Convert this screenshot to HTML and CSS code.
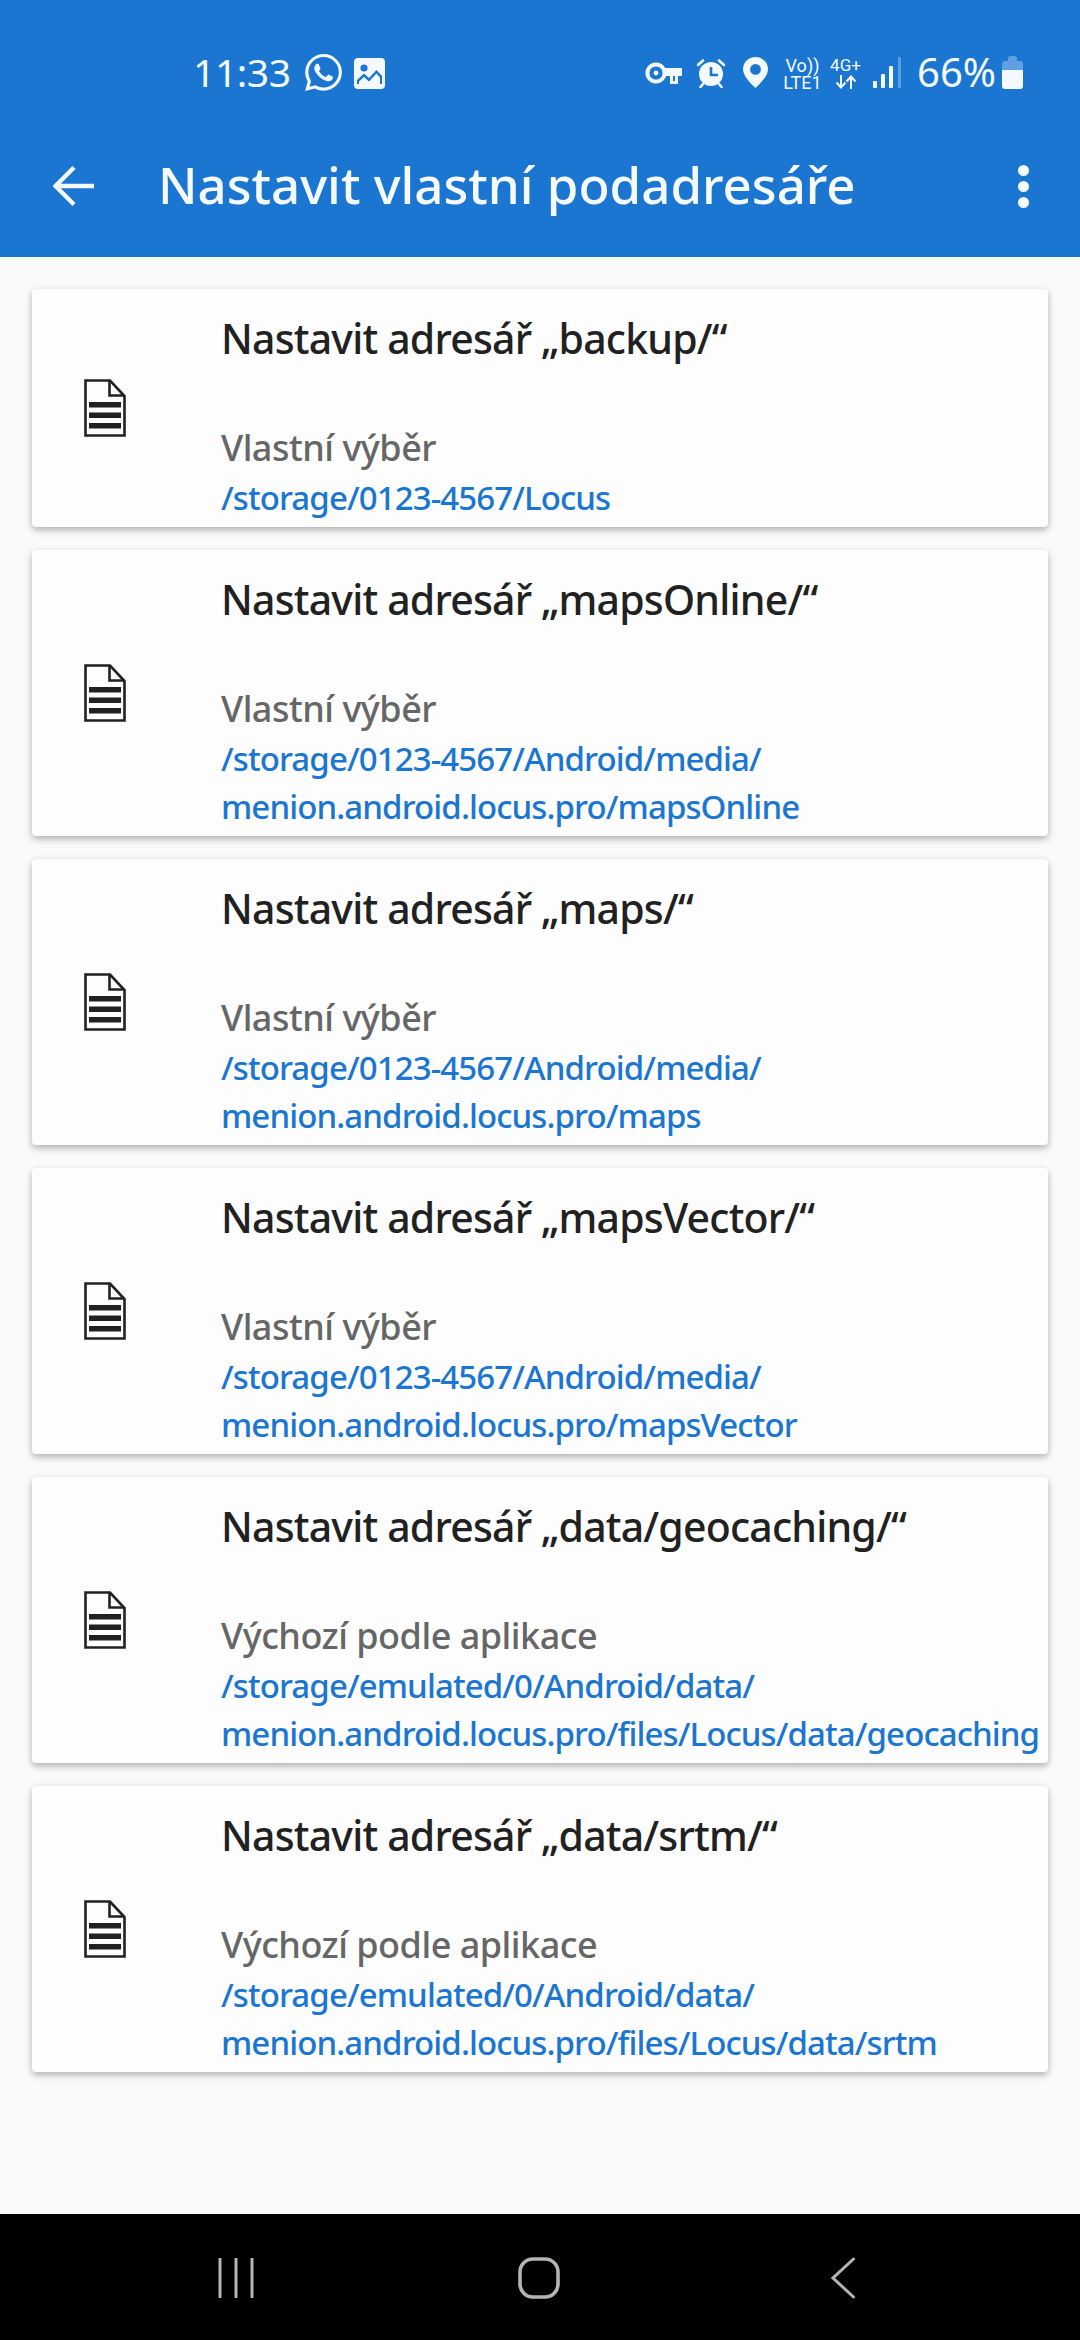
FILE: index.html
```html
<!DOCTYPE html>
<html lang="cs">
<head>
    <meta charset="UTF-8">
    <meta name="viewport" content="width=device-width, initial-scale=1.0">
    <title>Nastavit vlastní podadresáře</title>
    <link rel="stylesheet" href="styles.css">
</head>
<body>
    <svg class="defs" width="0" height="0">
        <symbol id="doc" viewBox="0 0 42 58">
            <path d="M1.5 1.5H26L40.5 17V56.5H1.5Z" fill="none" stroke="#212121" stroke-width="2.6"/>
            <path d="M25.500 2V16.500H40" fill="none" stroke="#212121" stroke-width="2.6"/>
            <rect x="5" y="23" width="32" height="5.500" fill="#212121"/>
            <rect x="5" y="33.500" width="32" height="5.500" fill="#212121"/>
            <rect x="5" y="44" width="32" height="5.500" fill="#212121"/>
        </symbol>
    </svg>

    <header class="top">
        <div class="status">
            <div class="status-left">
                <span class="clock">11:33</span>
                <svg class="ic-wa" viewBox="0 0 24 24"><path fill="#f3f9ff" d="M17.472 14.382c-.297-.149-1.758-.867-2.03-.967-.273-.099-.471-.148-.67.15-.197.297-.767.966-.94 1.164-.173.199-.347.223-.644.075-.297-.15-1.255-.463-2.39-1.475-.883-.788-1.48-1.761-1.653-2.059-.173-.297-.018-.458.13-.606.134-.133.298-.347.446-.52.149-.174.198-.298.298-.497.099-.198.05-.371-.025-.52-.075-.149-.669-1.612-.916-2.207-.242-.579-.487-.5-.669-.51-.173-.008-.371-.01-.57-.01-.198 0-.52.074-.792.372-.272.297-1.04 1.016-1.04 2.479 0 1.462 1.065 2.875 1.213 3.074.149.198 2.096 3.2 5.077 4.487.709.306 1.262.489 1.694.625.712.227 1.36.195 1.871.118.571-.085 1.758-.719 2.006-1.413.248-.694.248-1.289.173-1.413-.074-.124-.272-.198-.57-.347m-5.421 7.403h-.004a9.87 9.87 0 01-5.031-1.378l-.361-.214-3.741.982.998-3.648-.235-.374a9.86 9.86 0 01-1.51-5.26c.001-5.45 4.436-9.884 9.888-9.884 2.64 0 5.122 1.03 6.988 2.898a9.825 9.825 0 012.893 6.994c-.003 5.45-4.437 9.884-9.885 9.884m8.413-18.297A11.815 11.815 0 0012.05 0C5.495 0 .16 5.335.157 11.892c0 2.096.547 4.142 1.588 5.945L.057 24l6.305-1.654a11.882 11.882 0 005.683 1.448h.005c6.554 0 11.89-5.335 11.893-11.893a11.821 11.821 0 00-3.48-8.413z"/></svg>
                <svg class="ic-pic" viewBox="0 0 31 31"><rect width="31" height="31" rx="4" fill="#f3f9ff"/><circle cx="10" cy="10" r="3.6" fill="#1b76d2"/><path d="M3 26V22L10 15.5L15 20L22.5 12L28 18V26Z" fill="#1b76d2"/><path d="M5 26.5V23.5L10 19L15 23.5L22.5 15.5L26 19.5V26.5Z" fill="#f3f9ff"/></svg>
            </div>
            <div class="status-right">
                <svg class="ic-key" viewBox="0 0 37 24"><circle cx="11" cy="12" r="8.600" fill="none" stroke="#f3f9ff" stroke-width="4"/><circle cx="11" cy="12" r="2.400" fill="#f3f9ff"/><path d="M19 7H37V15H33V23H25V15H19Z" fill="#f3f9ff"/><path d="M28 15H30V20H28Z" fill="#1b76d2"/></svg>
                <svg class="ic-alarm" viewBox="0 0 28 30"><circle cx="14" cy="16" r="12" fill="#f3f9ff"/><path d="M14 9V17H21" fill="none" stroke="#1b76d2" stroke-width="2.6"/><path d="M1 7L6 2.5M27 7L22 2.5M3.5 29L6 26M24.5 29L22 26" stroke="#f3f9ff" stroke-width="2.6" stroke-linecap="round"/></svg>
                <svg class="ic-pin" viewBox="0 0 25 31"><path fill="#f3f9ff" fill-rule="evenodd" d="M12.5 0C5.6 0 0 5.4 0 12.2C0 18 6 25 12.5 31C19 25 25 18 25 12.2C25 5.4 19.4 0 12.5 0ZM12.5 7A5.4 5.4 0 1 1 12.5 17.8A5.4 5.4 0 1 1 12.5 7Z"/></svg>
                <div class="net net-volte"><span>Vo))</span><span>LTE1</span></div>
                <div class="net net-4g">
                    <span>4G+</span>
                    <svg class="ic-updown" viewBox="0 0 22 14"><path d="M6 0V12M1.5 7.5L6 12.5L10.5 7.5M16 14V2M11.5 6.5L16 1.5L20.5 6.5" fill="none" stroke="#f3f9ff" stroke-width="2"/></svg>
                </div>
                <svg class="ic-signal" viewBox="0 0 28 31"><rect x="0" y="24" width="4" height="7" rx="1" fill="#f3f9ff"/><rect x="8" y="17" width="4" height="14" rx="1" fill="#f3f9ff"/><rect x="16" y="9" width="4" height="22" rx="1" fill="#f3f9ff"/><rect x="25" y="0" width="3" height="31" rx="1" fill="#5a9de2"/></svg>
                <span class="battery-text">66%</span>
                <svg class="ic-battery" viewBox="0 0 21 33"><path d="M6 2.5Q6 0 8.500 0H12.500Q15 0 15 2.500V5H18Q21 5 21 8V14H0V8Q0 5 3 5H6Z" fill="#5f9fe3"/><path d="M0 14H21V30Q21 33 18 33H3Q0 33 0 30Z" fill="#f3f9ff"/></svg>
            </div>
        </div>
        <div class="toolbar">
            <svg class="ic-back" viewBox="0 0 42 42"><path d="M41 21H3M21 2.500L2.500 21L21 39.500" fill="none" stroke="#f5faff" stroke-width="4.400"/></svg>
            <h1 class="toolbar-title">Nastavit vlastní podadresáře</h1>
            <div class="more"><i></i><i></i><i></i></div>
        </div>
    </header>

    <main class="list">
        <section class="card">
            <svg class="doc"><use href="#doc"/></svg>
            <div class="card-body">
                <h2 class="card-title">Nastavit adresář „backup/“</h2>
                <p class="card-sub">Vlastní výběr</p>
                <p class="card-path">/storage/0123-4567/Locus</p>
            </div>
        </section>
        <section class="card">
            <svg class="doc"><use href="#doc"/></svg>
            <div class="card-body">
                <h2 class="card-title">Nastavit adresář „mapsOnline/“</h2>
                <p class="card-sub">Vlastní výběr</p>
                <p class="card-path">/storage/0123-4567/Android/media/<br>menion.android.locus.pro/mapsOnline</p>
            </div>
        </section>
        <section class="card">
            <svg class="doc"><use href="#doc"/></svg>
            <div class="card-body">
                <h2 class="card-title">Nastavit adresář „maps/“</h2>
                <p class="card-sub">Vlastní výběr</p>
                <p class="card-path">/storage/0123-4567/Android/media/<br>menion.android.locus.pro/maps</p>
            </div>
        </section>
        <section class="card">
            <svg class="doc"><use href="#doc"/></svg>
            <div class="card-body">
                <h2 class="card-title">Nastavit adresář „mapsVector/“</h2>
                <p class="card-sub">Vlastní výběr</p>
                <p class="card-path">/storage/0123-4567/Android/media/<br>menion.android.locus.pro/mapsVector</p>
            </div>
        </section>
        <section class="card">
            <svg class="doc"><use href="#doc"/></svg>
            <div class="card-body">
                <h2 class="card-title">Nastavit adresář „data/geocaching/“</h2>
                <p class="card-sub">Výchozí podle aplikace</p>
                <p class="card-path">/storage/emulated/0/Android/data/<br>menion.android.locus.pro/files/Locus/data/geocaching</p>
            </div>
        </section>
        <section class="card">
            <svg class="doc"><use href="#doc"/></svg>
            <div class="card-body">
                <h2 class="card-title">Nastavit adresář „data/srtm/“</h2>
                <p class="card-sub">Výchozí podle aplikace</p>
                <p class="card-path">/storage/emulated/0/Android/data/<br>menion.android.locus.pro/files/Locus/data/srtm</p>
            </div>
        </section>
    </main>

    <nav class="navbar">
        <svg class="nav-recents" viewBox="0 0 36 40"><path d="M2 1V39M18 1V39M34 1V39" stroke="#b4b4b4" stroke-width="3" stroke-linecap="round"/></svg>
        <svg class="nav-home" viewBox="0 0 42 42"><rect x="2" y="2" width="38" height="38" rx="13" fill="none" stroke="#b4b4b4" stroke-width="3.600"/></svg>
        <svg class="nav-back" viewBox="0 0 24 42"><path d="M22.500 2L2 21L22.500 40" fill="none" stroke="#b4b4b4" stroke-width="3" stroke-linecap="round"/></svg>
    </nav>
</body>
</html>
```

FILE: styles.css
```css
* {
    box-sizing: border-box;
}

html, body {
    margin: 0;
    padding: 0;
}

body {
    width: 1080px;
    height: 2340px;
    display: flex;
    flex-direction: column;
    font-family: "Noto Sans", "Open Sans", sans-serif;
    background-color: #fafafa;
    overflow: hidden;
}

.defs {
    position: absolute;
}

/* Blue header: status bar + toolbar */
.top {
    height: 257px;
    flex: none;
    background-color: #1b76d2;
    color: #f5faff;
}

.status {
    height: 144px;
    padding: 54px 57px 0 193px;
    display: flex;
    justify-content: space-between;
    align-items: flex-start;
}

.status-left, .status-right {
    display: flex;
    align-items: flex-start;
}

.clock {
    font-size: 39px;
    line-height: 36px;
    letter-spacing: -0.4px;
    width: 112px;
}

.ic-wa {
    width: 37px;
    height: 37px;
}

.ic-pic {
    width: 31px;
    height: 31px;
    margin: 4px 0 0 12px;
}

.ic-key {
    width: 37px;
    height: 24px;
    margin-top: 7px;
}

.ic-alarm {
    width: 28px;
    height: 30px;
    margin: 4px 0 0 15px;
}

.ic-pin {
    width: 25px;
    height: 31px;
    margin: 3px 0 0 18px;
}

.net {
    display: flex;
    flex-direction: column;
    align-items: center;
    font-family: Roboto, sans-serif;
    font-size: 18px;
    line-height: 17px;
    margin-top: 3px;
}

.net-volte {
    width: 39px;
    margin-left: 15px;
}

.net-4g {
    width: 31px;
    margin-left: 8px;
    font-size: 17px;
}

.ic-updown {
    width: 22px;
    height: 14px;
    margin-top: 1px;
}

.ic-signal {
    width: 28px;
    height: 31px;
    margin: 3px 0 0 12px;
}

.battery-text {
    font-size: 40px;
    line-height: 36px;
    margin-left: 16px;
    width: 78px;
}

.ic-battery {
    width: 21px;
    height: 33px;
    margin: 2px 0 0 7px;
}

.toolbar {
    height: 84px;
    padding: 0 51px 0 53px;
    display: flex;
    align-items: center;
}

.ic-back {
    width: 42px;
    height: 42px;
    flex: none;
}

.toolbar-title {
    flex: 1;
    margin: 0 0 4px 63px;
    font-size: 51px;
    font-weight: 500;
    line-height: 60px;
}

.more {
    display: flex;
    flex-direction: column;
    gap: 5px;
}

.more i {
    display: block;
    width: 11px;
    height: 11px;
    border-radius: 50%;
    background-color: #f5faff;
}

/* Cards */
.list {
    flex: 1;
    padding: 32px 32px 0;
    display: flex;
    flex-direction: column;
    gap: 23px;
}

.card {
    display: flex;
    align-items: center;
    background-color: #fdfdfd;
    border-radius: 4px;
    box-shadow: 0 3px 7px rgba(0, 0, 0, 0.3);
}

.doc {
    width: 42px;
    height: 58px;
    flex: none;
    margin: 0 95px 0 52px;
}

.card-body {
    flex: 1;
    min-width: 0;
    padding-bottom: 5px;
}

.card-title {
    margin: 0 0 54px;
    padding-top: 19px;
    font-size: 41px;
    font-weight: 500;
    line-height: 60px;
    letter-spacing: -0.8px;
    color: #212121;
}

.card-sub {
    margin: 0;
    font-size: 36px;
    line-height: 52px;
    font-weight: 500;
    letter-spacing: -0.5px;
    color: #666666;
}

.card-path {
    margin: 0;
    font-size: 33px;
    line-height: 48px;
    font-weight: 500;
    letter-spacing: -0.9px;
    color: #1b76d2;
    white-space: nowrap;
}

/* Android navigation bar */
.navbar {
    height: 126px;
    flex: none;
    background-color: #000;
    display: flex;
    align-items: center;
    padding-top: 2px;
}

.nav-recents {
    width: 36px;
    height: 40px;
    margin-left: 218px;
}

.nav-home {
    width: 42px;
    height: 42px;
    margin-left: 264px;
}

.nav-back {
    width: 24px;
    height: 42px;
    margin-left: 271px;
}
```
